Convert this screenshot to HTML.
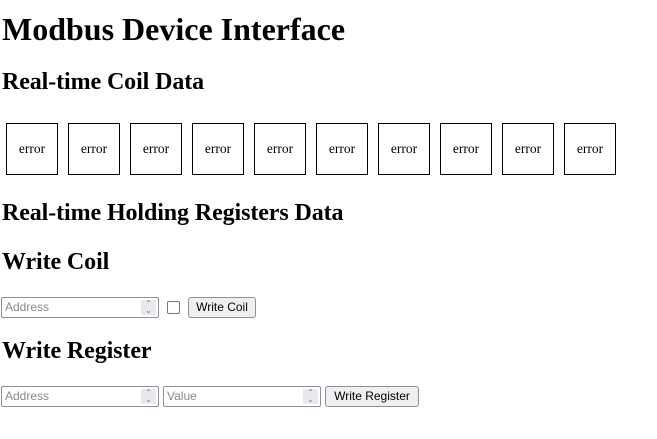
<!DOCTYPE html>
<html><head><meta charset="utf-8"><style>
body{margin:0;background:#fff;font-family:"Liberation Serif",serif;color:#000;width:657px;height:439px;overflow:hidden;position:relative}
.a{position:absolute;left:2px;margin:0;font-weight:bold;white-space:nowrap;line-height:normal}
h1.a{font-size:32px}
h2.a{font-size:24px;letter-spacing:-0.1px}
.box{position:absolute;top:123px;width:50px;height:50px;border:1px solid #000;display:flex;align-items:center;justify-content:center;font-size:13.5px}
.in,.btn{position:absolute;box-sizing:border-box;font-family:"Liberation Sans",sans-serif;font-size:12px;white-space:nowrap}
.in{height:21px;width:158px;border:1px solid #8f8f9d;border-radius:2px;padding:0 3px;line-height:19px;color:#8a8a8a}
.in .sp{position:absolute;right:2px;top:2px;width:15px;height:15px;background:#e9e9ed;color:#777;font-size:8px;line-height:7px;text-align:center}
.btn{height:21px;border:1px solid #8f8f9d;border-radius:3px;background:#efefef;text-align:center;line-height:19px;color:#000}
.cb{position:absolute;width:11px;height:11px;border:1px solid #767676;border-radius:2px}
</style></head><body>
<h1 class="a" style="top:11px">Modbus Device Interface</h1>
<h2 class="a" style="top:69px">Real-time Coil Data</h2>
<div class="box" style="left:6px">error</div>
<div class="box" style="left:68px">error</div>
<div class="box" style="left:130px">error</div>
<div class="box" style="left:192px">error</div>
<div class="box" style="left:254px">error</div>
<div class="box" style="left:316px">error</div>
<div class="box" style="left:378px">error</div>
<div class="box" style="left:440px">error</div>
<div class="box" style="left:502px">error</div>
<div class="box" style="left:564px">error</div>
<h2 class="a" style="top:200px">Real-time Holding Registers Data</h2>
<h2 class="a" style="top:249px">Write Coil</h2>
<div class="in" style="left:1px;top:297px">Address<div class="sp">⌃<br>⌄</div></div>
<div class="cb" style="left:167px;top:301px"></div>
<div class="btn" style="left:188px;top:297px;width:68px">Write Coil</div>
<h2 class="a" style="top:338px">Write Register</h2>
<div class="in" style="left:1px;top:386px">Address<div class="sp">⌃<br>⌄</div></div>
<div class="in" style="left:163px;top:386px">Value<div class="sp">⌃<br>⌄</div></div>
<div class="btn" style="left:325px;top:386px;width:94px">Write Register</div>
</body></html>
